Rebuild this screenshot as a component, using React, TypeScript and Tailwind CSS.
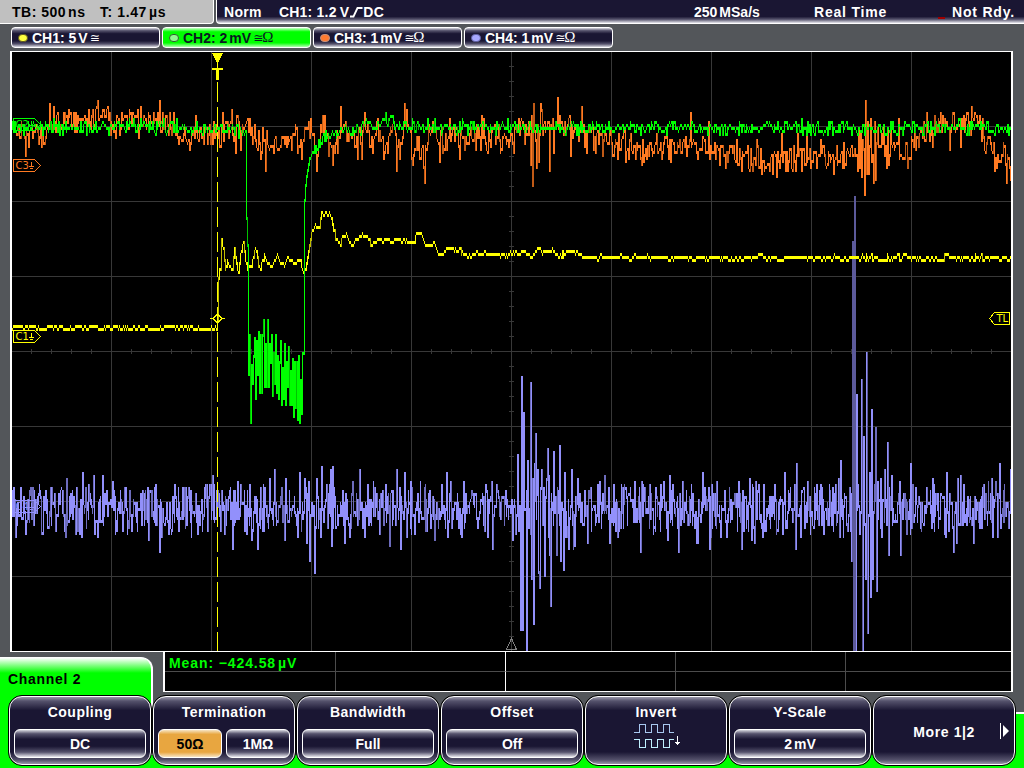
import type { ReactNode } from 'react'

import clsx from 'clsx'

type Point = [number, number]

interface Trace {
  bright: string
  dim: string
  faint: string
}

interface TraceOptions {
  base: Point[]
  peaks?: Point[]
  noise: number
  seed: number
  dimShare?: number
  // chance that a column keeps the previous sample
  hold?: number
  // chance that a column covers one more sample
  dense?: number
}

const LEFT = 12
const RIGHT = 1011
const TOP = 52
const BOTTOM = 651

// "x,y x,y ..." in screen pixels
const parse = (data: string): Point[] =>
  data
    .trim()
    .split(/\s+/)
    .map((pair) => pair.split(',').map(Number) as Point)

const createRandom = (seed: number) => {
  let state = seed
  return () => {
    state = (state * 1664525 + 1013904223) % 4294967296
    return state / 4294967296
  }
}

const interpolate = (points: Point[], x: number) => {
  if (x <= points[0][0]) return points[0][1]
  for (let i = 1; i < points.length; i++) {
    const [x1, y1] = points[i]
    const [x0, y0] = points[i - 1]
    if (x <= x1) return y0 + ((y1 - y0) * (x - x0)) / (x1 - x0 || 1)
  }
  return points[points.length - 1][1]
}

// The converter resolves three pixels per step
const quantize = (y: number) => Math.round((y - 2) / 3) * 3 + 2

// One column per pixel, each joining the previous sample to the current one
const buildTrace = ({
  base,
  peaks = [],
  noise,
  seed,
  dimShare = 0.25,
  hold = 0,
  dense = 0,
}: TraceOptions): Trace => {
  const random = createRandom(seed)
  const fixed = new Map(peaks)
  const trace: Trace = { bright: '', dim: '', faint: '' }
  const spread = () => (random() + random() - 1) * noise
  let previous = interpolate(base, LEFT)
  let offset = 0

  for (let x = LEFT; x < RIGHT; x++) {
    if (random() >= hold) offset = spread()
    const center = interpolate(base, x)
    const y = quantize(fixed.get(x) ?? center + offset)
    const covered = [y]
    if (Math.abs(previous - y) > 3) covered.push(previous)
    if (random() < dense) covered.push(quantize(center + spread()))

    const top = Math.max(TOP, Math.min(...covered) - 1)
    const bottom = Math.min(BOTTOM, Math.max(...covered) + 2)
    const column = `M${x + 0.5} ${Math.round(top)}V${Math.round(bottom)}`
    const height = bottom - top
    const dimmed = random() < dimShare

    if (height > 270) trace.faint += column
    else if (height > 4 && dimmed) trace.dim += column
    else trace.bright += column
    previous = y
  }
  return trace
}

const CH1_BASE = parse(`
  12,327.5 216,327.5 217,320 218,280 219,270 220,268 221,241 223,249 225,270
  227,262 229,269 232,269 234,248 236,264 238,273 240,255 243,242 245,260 247,267
  251,267 254,251 256,250 258,264 260,267 264,254 267,263 272,266 277,254 280,263
  284,266 287,258 290,262 300,260 302,268 304,275 308,250 311,233 315,224 318,231
  321,215 323,212 328,214 329,212 332,222 336,242 340,243 343,233 346,234 348,241
  353,245 356,240 362,236 366,236 371,245 376,240 382,240 386,238 392,241 400,240
  411,242 416,236 421,236 424,244 430,245 434,243 438,252 445,254 448,248 455,248
  460,250 466,254 471,257 475,254 495,254 505,257 510,253 515,252 520,254 522,251
  530,257 534,256 536,251 545,251 552,250 558,257 565,254 575,252 582,257 600,257
  700,257.8 1011,257.8
`)

const CH2_BASE = parse(`
  12,128 60,127 110,128 140,124 180,128 245,129 330,137 345,129 350,131 360,126
  372,124 380,121 390,118 396,124 410,126 450,127 1011,128
`)
const CH2_PEAKS = parse(`
  246,218 247,245 248,373 249,334 250,423 251,366 252,382 253,357 254,337 255,397
  256,340 257,375 258,331 259,393 260,335 261,393 262,335 263,319 264,385 265,343
  266,385 267,319 268,385 269,345 270,363 271,334 272,396 273,354 274,382 275,334
  276,393 277,357 278,397 279,362 280,340 281,405 282,367 283,399 284,345 285,403
  286,361 287,386 288,346 289,405 290,372 291,403 292,358 293,415 294,361 295,408
  296,363 297,420 298,355 299,421 300,379 301,414 302,352 303,352 304,200 305,184
  306,177 307,171 308,164 309,159 310,157 311,154 312,151 313,153 314,146 315,153
  316,146 317,149 318,141 319,145 320,139 321,142 322,137 323,135 324,141 326,141
`)

const CH3_BASE = parse(`
  12,128 20,135 28,138 45,130 60,123 100,119 130,122 165,122 178,134 215,133
  230,128 245,130 265,143 300,138 310,128 316,152 320,130 324,125 332,155 336,140
  342,130 360,138 364,126 372,142 376,130 386,144 392,126 397,155 406,122 412,145
  422,148 432,132 440,146 452,134 470,138 510,136 520,128 535,136 560,126 580,132
  600,140 640,148 680,143 710,147 740,155 770,163 800,155 830,160 850,150 890,145
  905,150 920,138 940,125 960,125 975,120 985,138 995,158 1003,152 1011,168
`)
const CH3_PEAKS = parse(`
  25,154 41,145 49,103 53,106 63,112 73,112 84,115 88,110 97,100 107,106 121,112
  129,110 140,106 159,100 169,112 173,112 178,144 187,144 195,115 203,144 212,144
  222,112 231,109 235,153 240,148 246,121 249,118 260,157 265,169 279,150 291,150
  295,124 301,157 308,121 310,118 316,169 322,115 332,163 340,106 346,141 357,157
  361,157 372,151 377,118 383,157 387,153 392,124 396,169 399,157 404,103 412,163
  417,148 423,166 424,181 439,160 442,153 449,118 459,157 464,148 480,148 481,115
  483,118 500,151 513,151 521,118 530,163 531,115 532,184 533,103 536,166 537,124
  538,160 540,103 541,109 549,169 553,151 557,97 569,115 570,154 581,106 586,151
  595,153 602,154 617,157 628,157 640,157 641,163 658,151 670,160 681,153 690,112
  697,157 708,121 709,157 725,166 736,140 741,169 749,171 756,139 757,145 764,171
  769,171 776,175 781,133 787,171 792,171 797,133 801,169 806,136 816,166 820,139
  833,172 843,142 857,169 858,127 859,166 860,130 861,175 863,148 864,193 865,100
  866,172 867,122 868,172 870,118 871,160 873,181 874,121 875,178 877,128 883,124
  886,166 887,128 888,163 898,118 907,166 926,112 932,147 940,112 949,150 960,147
  963,115 971,106 979,115 991,150 996,168 1003,142 1006,181 1010,178
`)

const CH4_BASE: Point[] = [
  [12, 509],
  [1011, 509],
]
const CH4_PEAKS = parse(`
  13,487 15,537 20,487 25,534 30,487 32,488 41,534 43,496 54,493 60,490 65,537
  66,478 81,537 82,472 88,484 93,475 97,537 102,475 106,490 115,534 124,487
  129,490 131,531 142,490 148,540 154,487 159,552 161,537 168,534 174,484 182,487
  188,488 197,534 204,487 207,531 212,475 220,531 221,490 232,549 237,481 240,484
  249,484 251,540 257,549 260,487 263,484 269,478 274,469 284,540 285,478 297,537
  299,472 304,478 306,543 308,482 309,561 314,573 316,478 320,537 321,466 326,484
  330,469 331,546 332,466 342,490 344,543 349,537 352,481 359,469 364,537 367,484
  374,487 379,534 385,484 389,546 392,490 396,469 399,487 400,549 404,472 406,537
  410,481 414,534 417,493 429,490 434,540 441,484 446,472 447,537 450,481 458,528
  463,481 474,493 484,531 485,484 487,537 491,481 492,549 496,484 505,490 512,540
  515,534 517,454 520,628 521,376 522,630 523,412 524,510 525,510 526,651 527,460
  528,528 530,382 531,577 532,478 533,622 534,463 535,433 536,495 537,469 538,571
  539,588 541,469 543,487 544,574 546,478 547,448 548,475 549,553 550,604 551,502
  553,451 556,553 559,445 560,559 563,568 564,472 568,547 571,469 573,547 574,546
  577,478 587,541 590,487 599,481 604,475 609,541 613,484 617,535 621,484 624,484
  634,481 640,550 641,481 643,484 655,487 667,538 669,475 672,484 678,550 682,481
  692,493 696,541 697,543 702,472 704,487 709,547 711,484 716,481 720,537 724,490
  726,535 738,481 741,547 749,478 751,538 752,487 754,541 755,481 757,490 762,535
  763,484 774,484 776,532 784,472 788,490 795,547 796,463 800,537 803,487 816,484
  820,484 823,534 835,484 838,478 839,537 840,460 849,487 851,561 852,241 853,651
  854,196 855,651 856,394 857,484 859,532 861,379 862,651 863,436 865,577 866,352
  867,633 869,472 870,597 871,409 872,577 875,427 876,591 880,478 881,535 884,469
  887,442 888,553 891,475 899,481 900,553 906,532 910,463 912,484 926,487 932,478
  945,537 946,472 953,550 956,541 957,478 960,475 973,543 974,496 983,484 991,478
  992,535 995,481 997,535 999,463 1010,469
`)

const ch1 = buildTrace({
  base: CH1_BASE,
  noise: 3.2,
  seed: 7,
  dimShare: 0.4,
  hold: 0.4,
})
const ch2 = buildTrace({
  base: CH2_BASE,
  peaks: CH2_PEAKS,
  noise: 8,
  seed: 21,
  dimShare: 0.12,
  hold: 0.15,
})
const ch3 = buildTrace({
  base: CH3_BASE,
  peaks: CH3_PEAKS,
  noise: 17,
  seed: 5,
  dimShare: 0.28,
  hold: 0.15,
})
const ch4 = buildTrace({
  base: CH4_BASE,
  peaks: CH4_PEAKS,
  noise: 29,
  seed: 13,
  dimShare: 0.22,
  hold: 0.1,
  dense: 0.65,
})

interface TracePathProps {
  trace: Trace
  bright: string
  dim: string
  faint: string
}

const TracePath = ({ trace, bright, dim, faint }: TracePathProps) => (
  <>
    <path d={trace.faint} stroke={faint} />
    <path d={trace.dim} stroke={dim} />
    <path d={trace.bright} stroke={bright} />
  </>
)

interface ChannelMarkerProps {
  name: string
  y: number
  color: string
}

const ChannelMarker = ({ name, y, color }: ChannelMarkerProps) => (
  <g stroke={color} fill="none">
    <path d={`M13.5 ${y + 0.5}h21l6 6l-6 6h-21z`} />
    <path d={`M31.5 ${y + 3}v5M29 ${y + 7.5}h5M30 ${y + 9.5}h3`} />
    <text
      x="15.5"
      y={y + 10}
      fill={color}
      stroke="none"
      className="font-['DejaVu_Sans',sans-serif] text-[10px] font-normal"
    >
      {name}
    </text>
  </g>
)

const verticals = [111, 211, 311, 411, 511, 611, 711, 811, 911]
const horizontals = [126, 201, 276, 351, 426, 501, 576]
const ticksX = Array.from({ length: 49 }, (_, i) => 31 + i * 20)
const ticksY = Array.from({ length: 39 }, (_, i) => 66 + i * 15)

const Screen = () => (
  <svg
    viewBox="12 52 999 599"
    width="999"
    height="599"
    className="block bg-black"
    shapeRendering="crispEdges"
    fill="none"
  >
    <g stroke="#383838">
      {verticals.map((x) => (
        <path key={x} d={`M${x + 0.5} 52V651`} />
      ))}
      {horizontals.map((y) => (
        <path key={y} d={`M12 ${y + 0.5}H1011`} />
      ))}
      {ticksX.map((x) => (
        <path key={x} d={`M${x + 0.5} 349v5`} />
      ))}
      {ticksY.map((y) => (
        <path key={y} d={`M509 ${y + 0.5}h5`} />
      ))}
    </g>

    <TracePath trace={ch4} bright="#9290fb" dim="#6d6cbc" faint="#5c5a9b" />
    <TracePath trace={ch3} bright="#ff7a22" dim="#c05a16" faint="#8a4210" />
    <TracePath trace={ch1} bright="#ffff00" dim="#c0bc00" faint="#a0a000" />
    <TracePath trace={ch2} bright="#00ff00" dim="#00c400" faint="#009000" />

    <ChannelMarker name="C2" y={118} color="#00ff00" />
    <ChannelMarker name="C3" y={159} color="#ff7a22" />
    <ChannelMarker name="C1" y={330} color="#ffff00" />
    <ChannelMarker name="C4" y={500} color="#9290fb" />

    {/* trigger position and level */}
    <path d="M212 53h11l-5 10h-1z" fill="#ffff00" />
    <path d="M217.5 60v8" stroke="#ffff00" />
    <path d="M212 68h11v2h-4v10h-3v-10h-4z" fill="#ffff00" />
    <path d="M217.5 82V651" stroke="#ffff00" strokeDasharray="20 5" />
    <path
      d="M210 318.5h3l4.5 -4.5l4.5 4.5h3M213 318.5l4.5 4.5l4.5 -4.5"
      stroke="#ffff00"
    />
    <path d="M1009.5 312.5h-15l-5 6l5 6h15z" stroke="#ffff00" />
    <text
      x="996.5"
      y="322"
      fill="#ffff00"
      className="font-['DejaVu_Sans',sans-serif] text-[10px] font-normal"
    >
      TL
    </text>
    <path d="M506.5 649.5h10l-5 -11z" stroke="#808080" />
  </svg>
)

const EdgeIcon = () => (
  <svg width="14" height="12" viewBox="0 0 14 12" fill="none">
    <path d="M1 10.5h3.5L8.5 2h5" stroke="white" strokeWidth="1.8" />
  </svg>
)

const TopBar = () => (
  <header className="flex h-6 gap-0.5">
    <div className="flex w-[214px] items-center rounded-br border-r border-b border-white bg-[#c0c0c0] pl-3 text-black">
      <span className="w-[88px] tracking-[0.5px]">
        TB: 500<span className="ml-0.5">ns</span>
      </span>
      <span className="tracking-[0.6px]">
        T: 1.47<span className="ml-0.5">µs</span>
      </span>
    </div>
    <div className="flex flex-1 items-center rounded-bl border-b border-l border-white bg-[linear-gradient(#1a1633_72%,#55526c_84%,#e8e8ee_100%)] pl-[7px] text-white">
      <span className="w-[55px] tracking-[0.3px]">Norm</span>
      <span className="flex w-[415px] items-center tracking-[0.2px]">
        CH1: 1.2<span className="ml-[3px]">V</span>
        <EdgeIcon />
        <span className="tracking-[0.5px]">DC</span>
      </span>
      <span className="w-[120px]">
        250<span className="ml-0.5">MSa/s</span>
      </span>
      <span className="w-[124px] tracking-[0.8px]">Real Time</span>
      <span className="mt-3 mr-[7px] h-0.5 w-[7px] bg-[#a00000]" />
      <span className="tracking-[0.8px]">Not Rdy.</span>
    </div>
  </header>
)

interface ChannelTabProps {
  label: string
  unit: string
  coupling: string
  active?: boolean
  led: string
}

const ChannelTab = ({ label, unit, coupling, active, led }: ChannelTabProps) => (
  <div
    className={clsx(
      'flex h-[21px] w-[149px] items-center rounded-[4px] border border-white pl-1.5',
      active
        ? 'bg-[linear-gradient(#c8ffc8_0%,#00ff00_20%,#00ff00_78%,#b0ffb0_100%)] text-[#0a1a20]'
        : 'bg-[linear-gradient(#d8d8e0_0%,#55526c_14%,#1a1633_30%,#1a1633_68%,#55526c_84%,#d8d8e0_100%)] text-white'
    )}
  >
    <span className={clsx('mr-1 h-2 w-2.5 rounded-full border', led)} />
    {label}
    <span className="ml-0.5">{unit}</span>
    <span className="ml-0.5 w-[9px] font-['DejaVu_Sans',sans-serif] text-[12px] font-normal">
      {coupling[0]}
    </span>
    <span className="font-['Liberation_Serif',serif] text-[15px] font-normal">
      {coupling.slice(1)}
    </span>
  </div>
)

const Measurements = () => (
  <div className="ml-[163px] grid h-10 w-[850px] grid-cols-[171px_170px_170px_170px_1fr] grid-rows-[20px_1fr] border-r-2 border-b border-l-2 border-white bg-black">
    {Array.from({ length: 10 }, (_, i) => (
      <div
        key={i}
        className={clsx(
          i < 5 && 'border-b border-b-[#4c4c4c]',
          i % 5 === 1 && 'border-r border-r-white',
          i % 5 !== 1 && i % 5 !== 4 && 'border-r border-r-[#4c4c4c]'
        )}
      >
        {i === 0 && (
          <span className="ml-1 block leading-[22px] tracking-[0.9px] whitespace-nowrap text-[#00ff00]">
            Mean: −424.58<span className="ml-0.5">µV</span>
          </span>
        )}
      </div>
    ))}
  </div>
)

interface SoftKeyProps {
  title?: string
  children?: ReactNode
}

const SoftKey = ({ title, children }: SoftKeyProps) => (
  <div className="h-[71px] w-36 rounded-[14px] border border-black bg-black">
    <div className="flex h-full flex-col items-center rounded-[13px] border border-white bg-[linear-gradient(#9a98aa_0%,#55526c_6%,#1a1633_20%,#1a1633_82%,#55526c_94%,#9a98aa_100%)] px-1 pt-[5px] text-white">
      <div className="h-[27px] leading-5 tracking-[0.5px]">{title}</div>
      {children}
    </div>
  </div>
)

interface ValueProps {
  children: ReactNode
  selected?: boolean
}

const Value = ({ children, selected }: ValueProps) => (
  <div
    className={clsx(
      'flex h-[29px] flex-1 items-center justify-center rounded-md border border-white pt-px',
      selected
        ? 'bg-[linear-gradient(#f6e4c4_0%,#e8a640_16%,#e8a640_82%,#f6e4c4_100%)] text-black'
        : 'bg-[linear-gradient(#d8d8e0_0%,#55526c_14%,#1a1633_34%,#1a1633_60%,#55526c_82%,#e8e8ee_100%)] text-white'
    )}
  >
    {children}
  </div>
)

const InvertIcon = () => (
  <svg
    width="48"
    height="26"
    viewBox="0 0 48 26"
    fill="none"
    shapeRendering="crispEdges"
    className="-mt-[5px] ml-[3px]"
  >
    <path d="M0 8.5h5.5v-8h6v8h6v-8h6v8h6v-8h6v8h4.5" stroke="#a8c8f0" />
    <path d="M0 15.5h5.5v8h6v-8h6v8h6v-8h6v8h6v-8h4.5" stroke="#c0f0ff" />
    <path d="M43.5 12v9M41 18.5h5M42 19.5h3" stroke="white" />
  </svg>
)

const SoftKeys = () => (
  <div className="flex pl-2">
    <SoftKey title="Coupling">
      <div className="flex w-[132px]">
        <Value>DC</Value>
      </div>
    </SoftKey>
    <SoftKey title="Termination">
      <div className="flex w-[132px] gap-1">
        <Value selected>50Ω</Value>
        <Value>1MΩ</Value>
      </div>
    </SoftKey>
    <SoftKey title="Bandwidth">
      <div className="flex w-[132px]">
        <Value>Full</Value>
      </div>
    </SoftKey>
    <SoftKey title="Offset">
      <div className="flex w-[132px]">
        <Value>Off</Value>
      </div>
    </SoftKey>
    <SoftKey title="Invert">
      <InvertIcon />
    </SoftKey>
    <SoftKey title="Y-Scale">
      <div className="flex w-[132px]">
        <Value>
          2<span className="ml-0.5">mV</span>
        </Value>
      </div>
    </SoftKey>
    <SoftKey>
      <div className="-mt-[6px] flex w-full items-center justify-end tracking-[0.6px]">
        <span className="mt-0.5 mr-[25px]">More 1|2</span>
        <svg width="9" height="16" viewBox="0 0 9 16" className="mr-px">
          <path d="M0.5 0v16" stroke="white" />
          <path d="M3 2l6 6l-6 6z" fill="white" />
        </svg>
      </div>
    </SoftKey>
  </div>
)

const App = () => (
  <main className="relative flex h-[768px] w-[1024px] flex-col overflow-hidden bg-[#53565a] font-['Liberation_Sans',sans-serif] text-[14px] leading-none font-bold">
    <TopBar />
    <nav className="mt-[3px] mb-[3px] ml-[11px] flex h-[21px] gap-0.5">
      <ChannelTab
        label="CH1: 5"
        unit="V"
        coupling="≅"
        led="border-[#605820] bg-[#ffff40]"
      />
      <ChannelTab
        label="CH2: 2"
        unit="mV"
        coupling="≅Ω"
        led="border-[#306030] bg-[#90f890]"
        active
      />
      <ChannelTab
        label="CH3: 1"
        unit="mV"
        coupling="≅Ω"
        led="border-[#c09080] bg-[#ff7a30]"
      />
      <ChannelTab
        label="CH4: 1"
        unit="mV"
        coupling="≅Ω"
        led="border-[#6060a0] bg-[#a8a8ff]"
      />
    </nav>
    <section className="ml-2.5 h-[601px] w-[1003px] border-x-2 border-y border-white">
      <Screen />
    </section>
    <Measurements />
    <footer className="relative mt-[3px] flex-1">
      {/* channel colour behind the soft keys, with its raised tab */}
      <div className="absolute inset-x-0 top-[60px] bottom-0 bg-[#00ff00]" />
      <div className="absolute top-[17px] right-0 bottom-0 w-5 border-t-2 border-white bg-[#00ff00]" />
      <div className="absolute -top-[38px] left-0 h-[98px] w-[153px] rounded-tr-[12px] border-t border-r-2 border-white bg-[linear-gradient(#ffffff_0px,#00ff00_15px)] pt-[14px] pl-2 tracking-[0.7px] text-black">
        Channel 2
      </div>
      <div className="relative">
        <SoftKeys />
      </div>
    </footer>
  </main>
)

export default App
